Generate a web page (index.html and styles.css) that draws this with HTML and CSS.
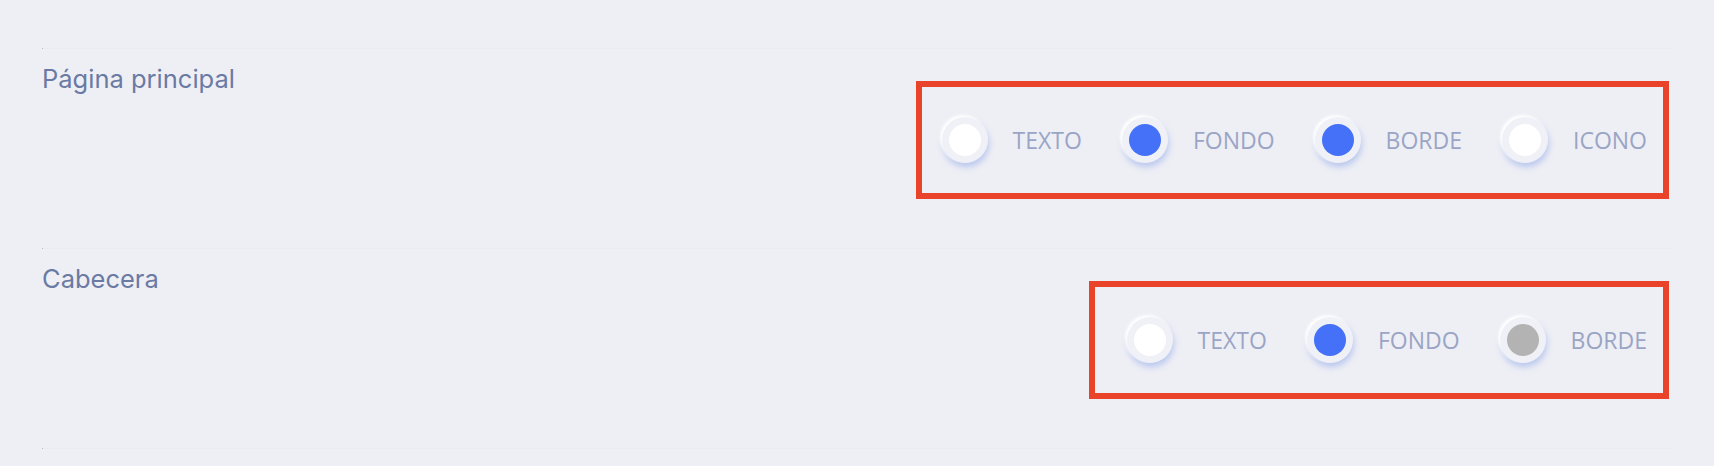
FILE: index.html
```html
<!DOCTYPE html>
<html lang="es">
  <head>
    <meta charset="UTF-8" />
    <meta name="viewport" content="width=device-width, initial-scale=1.0" />
    <title>Colores</title>
    <link rel="stylesheet" href="styles.css">
  </head>
  <body>
    <div class="divider"></div>
    <div class="setting-row">
      <div class="setting-title">Página principal</div>
      <div class="option-box">
        <div class="option">
          <span class="dot"><span class="dot-fill white"></span></span>
          <span class="option-label">TEXTO</span>
        </div>
        <div class="option">
          <span class="dot"><span class="dot-fill blue"></span></span>
          <span class="option-label">FONDO</span>
        </div>
        <div class="option">
          <span class="dot"><span class="dot-fill blue"></span></span>
          <span class="option-label">BORDE</span>
        </div>
        <div class="option">
          <span class="dot"><span class="dot-fill white"></span></span>
          <span class="option-label">ICONO</span>
        </div>
      </div>
    </div>

    <div class="divider"></div>
    <div class="setting-row">
      <div class="setting-title">Cabecera</div>
      <div class="option-box option-box-wide">
        <div class="option">
          <span class="dot"><span class="dot-fill white"></span></span>
          <span class="option-label">TEXTO</span>
        </div>
        <div class="option">
          <span class="dot"><span class="dot-fill blue"></span></span>
          <span class="option-label">FONDO</span>
        </div>
        <div class="option">
          <span class="dot"><span class="dot-fill gray"></span></span>
          <span class="option-label">BORDE</span>
        </div>
      </div>
    </div>

    <div class="divider"></div>
  </body>
</html>
```

FILE: styles.css
```css
body {
  margin: 0;
  padding: 48px 42px 0 42px;
  background: #eeeff5;
  font-family: "Inter", "Noto Sans", sans-serif;
}

.divider {
  height: 1px;
  background: #e9ebf1;
  border-left: 1px solid #b9bbc2;
}

.setting-row {
  display: flex;
  justify-content: space-between;
  align-items: flex-start;
  height: 199px;
}

.setting-title {
  margin-top: 15px;
  font-size: 25.5px;
  line-height: 29px;
  color: #6a7aa3;
}

.option-box {
  display: flex;
  align-items: center;
  height: 106px;
  margin-top: 32px;
  margin-right: 3px;
  padding: 0 16px 0 20px;
  border: 6px solid #e9432a;
}

.option-box-wide {
  padding-left: 32px;
}

.option {
  display: flex;
  align-items: center;
}

.option + .option {
  margin-left: 40px;
}

.dot {
  display: flex;
  align-items: center;
  justify-content: center;
  width: 46px;
  height: 46px;
  border-radius: 50%;
  background: #f0f1f7;
  box-shadow: -2px -2px 3px #ffffff, 1px 4px 6px rgba(90, 125, 225, 0.35);
}

.dot-fill {
  width: 32px;
  height: 32px;
  border-radius: 50%;
}

.dot-fill.white {
  background: #ffffff;
}

.dot-fill.blue {
  background: #4471f8;
}

.dot-fill.gray {
  background: #b3b3b3;
}

.option-label {
  margin-left: 25px;
  font-family: "Open Sans", "Noto Sans", sans-serif;
  font-size: 23px;
  color: #9aa5c5;
}
```
